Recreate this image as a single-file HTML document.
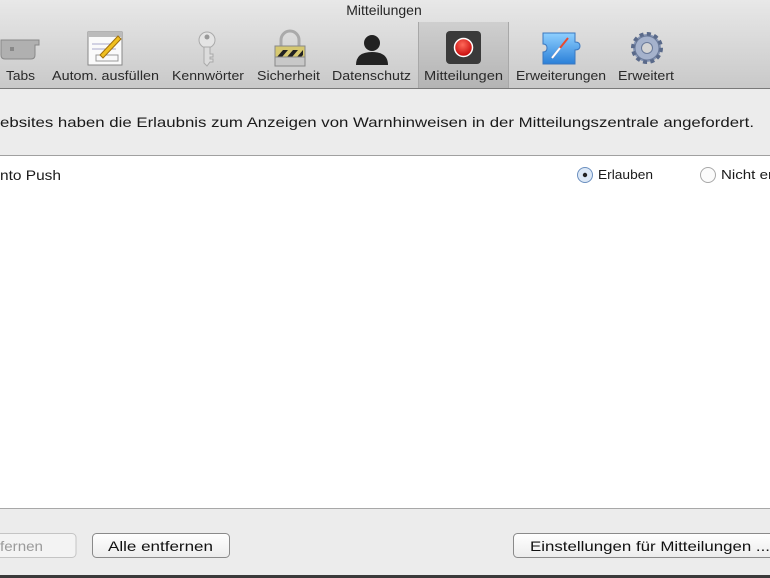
<!DOCTYPE html>
<html><head><meta charset="utf-8"><style>
html,body{margin:0;padding:0;width:770px;height:578px;overflow:hidden;background:#ececec}
svg{display:block}
text{font-family:"Liberation Sans",sans-serif}
</style></head><body>
<svg width="770" height="578" viewBox="0 0 770 578" xmlns="http://www.w3.org/2000/svg">
<defs>
<linearGradient id="tb" x1="0" y1="0" x2="0" y2="1"><stop offset="0" stop-color="#e8e8e8"/><stop offset="1" stop-color="#c9c9c9"/></linearGradient>
<linearGradient id="sel" x1="0" y1="0" x2="0" y2="1"><stop offset="0" stop-color="#cfcfcf"/><stop offset="1" stop-color="#b4b4b4"/></linearGradient>
<linearGradient id="btn" x1="0" y1="0" x2="0" y2="1"><stop offset="0" stop-color="#ffffff"/><stop offset="1" stop-color="#ececec"/></linearGradient>
<radialGradient id="red" cx="0.45" cy="0.35" r="0.6"><stop offset="0" stop-color="#ff6a5a"/><stop offset="1" stop-color="#c90d0d"/></radialGradient>
<linearGradient id="blue" x1="0" y1="0" x2="0" y2="1"><stop offset="0" stop-color="#8fd0ff"/><stop offset="1" stop-color="#2a7fd8"/></linearGradient>
</defs>
<rect x="0" y="0" width="770" height="88" fill="url(#tb)"/>
<rect x="418" y="22" width="91" height="66" fill="url(#sel)"/>
<line x1="418.5" y1="22" x2="418.5" y2="88" stroke="#a8a8a8"/>
<line x1="508.5" y1="22" x2="508.5" y2="88" stroke="#a8a8a8"/>
<line x1="0" y1="88.5" x2="770" y2="88.5" stroke="#7a7a7a"/>
<text x="384" y="15" font-size="14" fill="#262626" text-anchor="middle">Mitteilungen</text>
<g>
<path d="M1 40 H39 V45 H35 V55 Q35 59 31 59 H5 Q1 59 1 55 Z" fill="#b0b0b0" stroke="#888"/>
<rect x="10" y="47" width="4" height="4" fill="#888"/>
<rect x="88" y="32" width="34" height="33" fill="#fafafa" stroke="#888"/>
<rect x="88" y="32" width="34" height="5" fill="#bbb"/>
<line x1="92" y1="44" x2="116" y2="44" stroke="#aac"/><line x1="92" y1="49" x2="116" y2="49" stroke="#aac"/>
<rect x="96" y="55" width="22" height="6" fill="none" stroke="#999"/>
<path d="M100 55 L118 36 L121 39 L103 58 Z" fill="#f0c020" stroke="#a07010"/>
<circle cx="207" cy="40" r="8" fill="#e4e4e4" stroke="#aaa"/><circle cx="207" cy="37" r="2.5" fill="#999"/>
<path d="M204 47 H210 V54 H213 V57 H210 V59 H213 V62 H210 L207 66 L204 63 Z" fill="#dcdcdc" stroke="#aaa"/>
<path d="M281 46 V40 A9 9 0 0 1 299 40 V46" fill="none" stroke="#aaa" stroke-width="3"/>
<rect x="275" y="46" width="30" height="20" fill="#d6c870" stroke="#888"/>
<path d="M277 57 L283 50 L288 50 L282 57 Z M287 57 L293 50 L298 50 L292 57 Z M297 57 L303 50 L303 55 L301 57Z" fill="#222"/>
<rect x="275" y="57" width="30" height="9" fill="#c8c8c8" stroke="#888"/>
<circle cx="372" cy="43" r="8" fill="#222"/>
<path d="M356 65 Q356 52 372 52 Q388 52 388 65 Z" fill="#222"/>
<rect x="446" y="31" width="35" height="33" rx="4" fill="#3a3a3a"/>
<circle cx="463.5" cy="47.5" r="9" fill="url(#red)" stroke="#fff" stroke-width="1.5"/>
<path d="M543 33 H575 V42 Q580 42 580 46 Q580 50 575 50 V64 H543 V52 Q547 52 547 48 Q547 44 543 44 Z" fill="url(#blue)" stroke="#3a78c0"/>
<path d="M552 58 L568 38" stroke="#e84a30" stroke-width="2"/><path d="M552 58 L560 48" stroke="#fff" stroke-width="2"/>
<circle cx="647" cy="48" r="14" fill="#8b9ab8" stroke="#5a6a8a" stroke-width="4" stroke-dasharray="4 3.3"/>
<circle cx="647" cy="48" r="12" fill="#a5b2cc" stroke="#6a7a9a"/>
<circle cx="647" cy="48" r="5.5" fill="#d4d4d4" stroke="#6a7a9a"/>
</g>
<g font-size="12.5" fill="#2a2a2a">
<text x="6" y="80" textLength="29" lengthAdjust="spacingAndGlyphs">Tabs</text>
<text x="52" y="80" textLength="107" lengthAdjust="spacingAndGlyphs">Autom. ausfüllen</text>
<text x="172" y="80" textLength="72" lengthAdjust="spacingAndGlyphs">Kennwörter</text>
<text x="257" y="80" textLength="63" lengthAdjust="spacingAndGlyphs">Sicherheit</text>
<text x="332" y="80" textLength="79" lengthAdjust="spacingAndGlyphs">Datenschutz</text>
<text x="424" y="80" textLength="79" lengthAdjust="spacingAndGlyphs">Mitteilungen</text>
<text x="516" y="80" textLength="90" lengthAdjust="spacingAndGlyphs">Erweiterungen</text>
<text x="618" y="80" textLength="56" lengthAdjust="spacingAndGlyphs">Erweitert</text>
</g>
<rect x="0" y="89" width="770" height="66" fill="#ececec"/>
<text x="0" y="127" font-size="14" fill="#1a1a1a" textLength="754" lengthAdjust="spacingAndGlyphs">ebsites haben die Erlaubnis zum Anzeigen von Warnhinweisen in der Mitteilungszentrale angefordert.</text>
<line x1="0" y1="155.5" x2="770" y2="155.5" stroke="#a0a0a0"/>
<rect x="0" y="156" width="770" height="352" fill="#fff"/>
<text x="0" y="180" font-size="14" fill="#1a1a1a" textLength="61" lengthAdjust="spacingAndGlyphs">nto Push</text>
<circle cx="585" cy="175" r="7.5" fill="#dce8f6" stroke="#6b8fbf"/>
<circle cx="585" cy="175" r="2.2" fill="#222"/>
<text x="598" y="179" font-size="12.5" fill="#1a1a1a" textLength="55" lengthAdjust="spacingAndGlyphs">Erlauben</text>
<circle cx="708" cy="175" r="7.5" fill="#fbfbfb" stroke="#a8a8a8"/>
<text x="721" y="179" font-size="12.5" fill="#1a1a1a" textLength="52" lengthAdjust="spacingAndGlyphs">Nicht er</text>
<line x1="0" y1="508.5" x2="770" y2="508.5" stroke="#a8a8a8"/>
<rect x="0" y="509" width="770" height="66" fill="#ececec"/>
<rect x="-10" y="533.5" width="86" height="24" rx="4" fill="#f3f3f3" stroke="#c4c4c4"/>
<text x="0" y="551" font-size="14" fill="#9a9a9a" textLength="43" lengthAdjust="spacingAndGlyphs">fernen</text>
<rect x="92.5" y="533.5" width="137" height="24" rx="4" fill="url(#btn)" stroke="#8a8a8a"/>
<text x="108" y="551" font-size="14" fill="#111" textLength="105" lengthAdjust="spacingAndGlyphs">Alle entfernen</text>
<rect x="513.5" y="533.5" width="270" height="24" rx="4" fill="url(#btn)" stroke="#8a8a8a"/>
<text x="530" y="551" font-size="14" fill="#111" textLength="240" lengthAdjust="spacingAndGlyphs">Einstellungen für Mitteilungen ...</text>
<rect x="0" y="575" width="770" height="3" fill="#3a3a3a"/>
</svg>
</body></html>
